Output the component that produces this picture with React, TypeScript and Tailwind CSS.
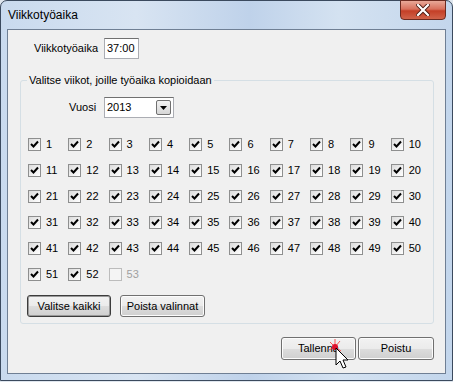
import React from "react";

const WEEKS = Array.from({ length: 53 }, (_, i) => i + 1);

const CheckBox = ({ n, disabled }: { n: number; disabled?: boolean }) => (
  <div className="flex items-center h-[26px]">
    <span
      className={`flex items-center justify-center w-[13px] h-[13px] border ${
        disabled ? "border-[#bcbcbc] bg-[#f4f4f4]" : "border-[#8e8f8f] bg-[linear-gradient(135deg,#dcdcdc,#ffffff)]"
      }`}
    >
      {!disabled && (
        <svg width="9" height="9" viewBox="0 0 9 9">
          <path d="M1 4 L3.5 6.5 L8 1.5" stroke="#000" strokeWidth="2" fill="none" />
        </svg>
      )}
    </span>
    <span className={`ml-[5px] ${disabled ? "text-[#a0a0a0]" : "text-black"}`}>{n}</span>
  </div>
);

const Button = ({
  children,
  className = "",
  focused,
}: {
  children: React.ReactNode;
  className?: string;
  focused?: boolean;
}) => (
  <button
    className={`h-[22px] rounded-[3px] border ${
      focused ? "border-[#3c3c3c] shadow-[inset_0_0_0_1px_#9a9a9a]" : "border-[#707070] shadow-[inset_0_0_0_1px_#fcfcfc]"
    } bg-[linear-gradient(#f2f2f2_0%,#ebebeb_50%,#dddddd_51%,#cfcfcf_100%)] text-black ${className}`}
  >
    {children}
  </button>
);

export default function App() {
  return (
    <div className="w-[453px] h-[382px] bg-[#dfe6ee] font-['Liberation_Sans',Arial,sans-serif] text-[11px] text-black">
      <div className="relative w-[453px] h-[381px] rounded-t-[7px] border border-[#3b4a5e] bg-[linear-gradient(90deg,#c9daee_0%,#d8e4f2_30%,#bfd2ea_55%,#d4e2f1_75%,#c3d6ec_100%)] flex flex-col">
        {/* title bar */}
        <div className="h-[28px] flex items-start justify-between">
          <span className="ml-[7px] mt-[6px] text-[12px] leading-[16px] text-black">Viikkotyöaika</span>
          <div className="mr-[6px] -mt-px w-[46px] h-[20px] rounded-b-[4px] border border-[#6b2a20] bg-[linear-gradient(#e8a898_0%,#d8705c_45%,#c43f27_55%,#d0634a_100%)] flex items-center justify-center">
            <svg width="14" height="12" viewBox="0 0 14 12">
              <path d="M2 1 L12 11 M12 1 L2 11" stroke="#4a1a12" strokeWidth="4" strokeLinecap="square" />
              <path d="M2 1 L12 11 M12 1 L2 11" stroke="#ffffff" strokeWidth="2.2" strokeLinecap="square" />
            </svg>
          </div>
        </div>

        {/* client area */}
        <div className="ml-[6px] w-[439px] h-[345px] border border-[#6f7f94] bg-[#f0f0f0]">
          <div className="flex items-center mt-[8px] pl-[26px]">
            <span className="w-[70px]">Viikkotyöaika</span>
            <div className="w-[35px] h-[21px] border border-[#abadb3] border-t-[#707070] bg-white flex items-center pl-[2px]">
              37:00
            </div>
          </div>

          <fieldset className="ml-[12px] mt-[14px] w-[414px] border border-[#d5dfe5] rounded-[3px] pb-[6px]">
            <legend className="ml-[6px] px-[2px] leading-[14px]">Valitse viikot, joille työaika kopioidaan</legend>

            <div className="flex items-center mt-[10px] ml-[48px]">
              <span className="w-[35px]">Vuosi</span>
              <div className="w-[70px] h-[21px] border border-[#abadb3] border-t-[#707070] bg-white flex items-center justify-between pl-[2px] pr-[2px]">
                <span>2013</span>
                <span className="w-[15px] h-[15px] border border-[#707070] rounded-[2px] bg-[linear-gradient(#f2f2f2,#d6d6d6)] flex items-center justify-center">
                  <svg width="7" height="4" viewBox="0 0 7 4">
                    <path d="M0 0 L7 0 L3.5 4 Z" fill="#000" />
                  </svg>
                </span>
              </div>
            </div>

            <div className="mt-[13px] ml-[7px] grid grid-cols-[repeat(10,40.3px)]">
              {WEEKS.map((n) => (
                <CheckBox key={n} n={n} disabled={n === 53} />
              ))}
            </div>

            <div className="flex mt-[8px] ml-[6px] gap-[9px]">
              <Button focused className="w-[84px]">
                Valitse kaikki
              </Button>
              <Button className="w-[85px]">Poista valinnat</Button>
            </div>
          </fieldset>

          <div className="ml-[12px] w-[414px] mt-[13px] flex justify-end gap-[2px]">
            <Button className="w-[75px] h-[23px]">Tallenna</Button>
            <Button className="w-[76px] h-[23px]">Poistu</Button>
          </div>
        </div>

        {/* mouse cursor with click marker */}
        <svg className="absolute left-[326px] top-[337px]" width="30" height="32" viewBox="0 0 30 32">
          <path d="M8 9 L3 4 M8 9 L13 3 M8 9 L2 12 M8 9 L14 13 M8 9 L8 1" stroke="#ff3030" strokeWidth="1" opacity="0.8" />
          <circle cx="8" cy="9" r="3" fill="#e0102a" />
          <path d="M9 10 L9 27 L13 23 L16 30 L19 29 L16 22 L21 22 Z" fill="#ffffff" stroke="#000" strokeWidth="1" strokeLinejoin="round" />
        </svg>
      </div>
    </div>
  );
}
